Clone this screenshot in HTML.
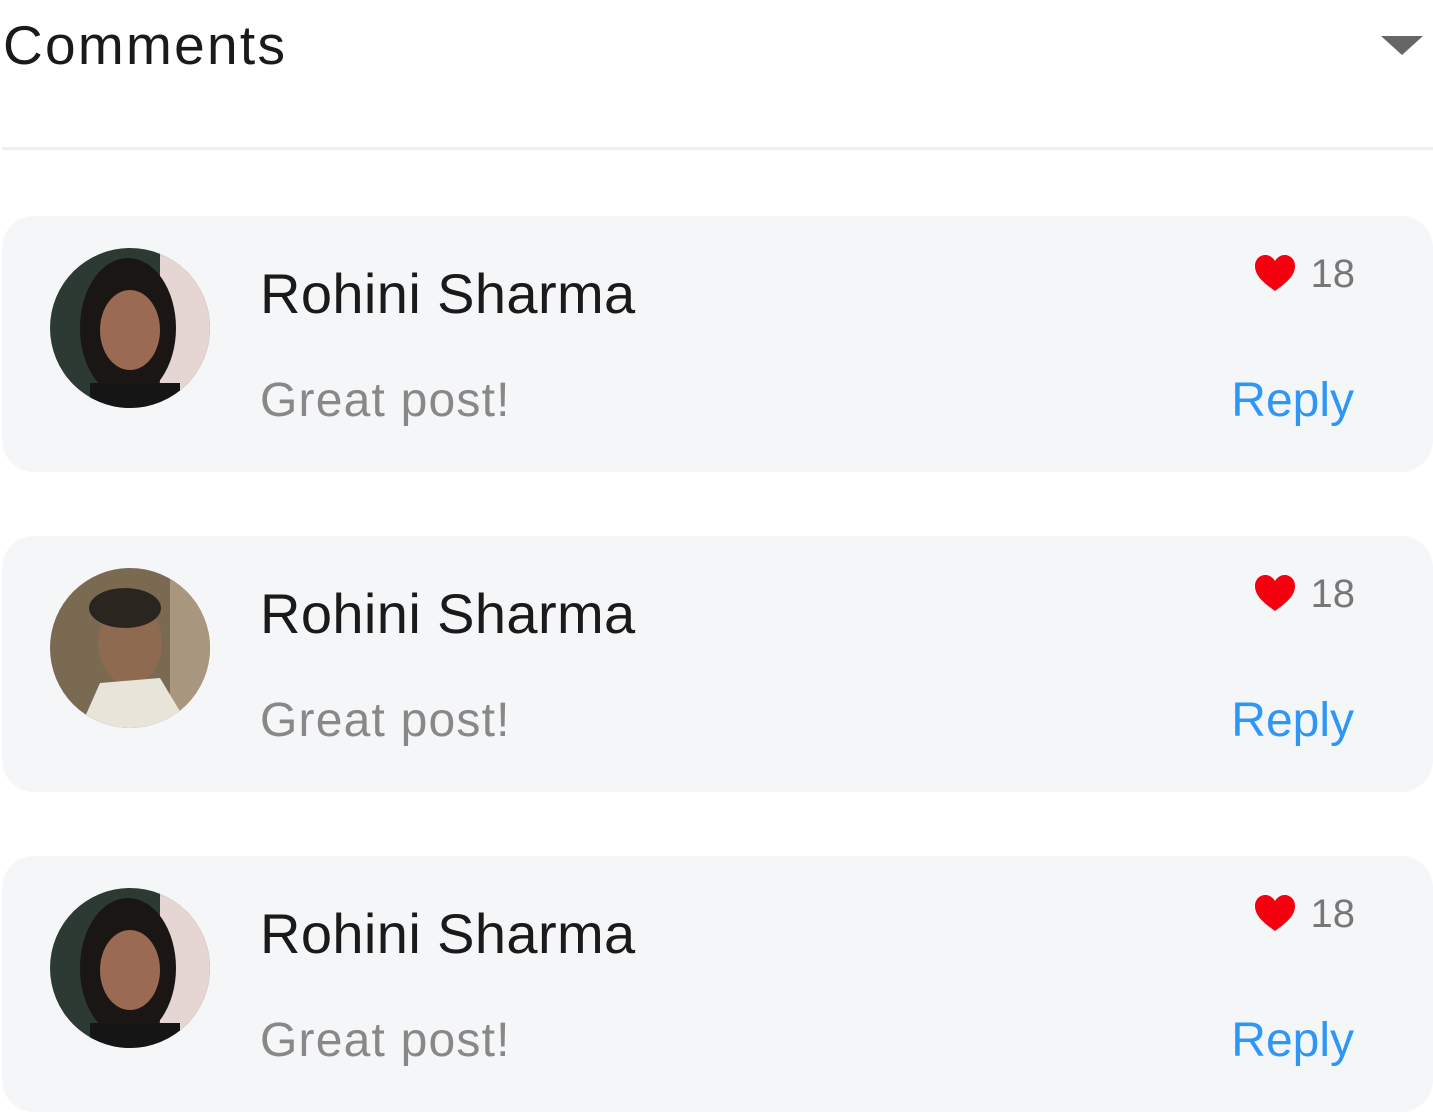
<!DOCTYPE html>
<html><head><meta charset="utf-8"><style>
*{margin:0;padding:0;box-sizing:border-box}
body{width:1433px;height:1112px;background:#fff;font-family:"Liberation Sans",sans-serif;position:relative;overflow:hidden}
.h{position:absolute;left:3px;top:13px;font-size:55px;color:#1a1a1a;letter-spacing:2.3px}
.chev{position:absolute;left:1381px;top:36px;width:0;height:0;border-left:21px solid transparent;border-right:21px solid transparent;border-top:19px solid #666}
.div{position:absolute;left:2px;top:147px;width:1431px;height:3px;background:#eceef0}
.card{position:absolute;left:2px;width:1431px;height:256px;background:#f5f6f8;border-radius:32px}
.av{position:absolute;left:48px;top:32px;width:160px;height:160px;border-radius:50%;overflow:hidden}
.name{position:absolute;left:258px;top:45px;font-size:56px;color:#1a1a1a;letter-spacing:0.4px}
.msg{position:absolute;left:258px;top:157px;font-size:48px;color:#888;letter-spacing:1.2px}
.reply{position:absolute;right:79px;top:157px;font-size:48px;color:#2e96f5}
.cnt{position:absolute;right:78px;top:36px;font-size:40px;color:#777}
.heart{position:absolute;left:1252px;top:38px}
</style></head><body>
<div class="h">Comments</div><div class="chev"></div><div class="div"></div>

<div class="card" style="top:216px">
<div class="av"><svg width="160" height="160"><rect width="160" height="160" fill="#2c3a33"/><rect x="110" width="50" height="160" fill="#e6d6d3"/><ellipse cx="78" cy="80" rx="48" ry="70" fill="#1a1614"/><ellipse cx="80" cy="82" rx="30" ry="40" fill="#9a6a52"/><rect x="40" y="135" width="90" height="30" fill="#151515"/></svg></div>
<div class="name">Rohini Sharma</div><div class="msg">Great post!</div><div class="reply">Reply</div>
<svg class="heart" width="42" height="38" viewBox="0 0 42 38"><path d="M21 37C10 29 1 22 1 12 1 5 6 1 11.5 1 16 1 19 4 21 7 23 4 26 1 30.5 1 36 1 41 5 41 12 41 22 32 29 21 37Z" fill="#f5000f"/></svg>
<div class="cnt">18</div></div>

<div class="card" style="top:536px">
<div class="av"><svg width="160" height="160"><rect width="160" height="160" fill="#7a6a52"/><rect x="120" width="40" height="160" fill="#a8977e"/><ellipse cx="80" cy="75" rx="32" ry="42" fill="#8d6a50"/><ellipse cx="75" cy="40" rx="36" ry="20" fill="#2b2520"/><path d="M30 160 L50 115 L110 110 L140 160Z" fill="#e8e4da"/></svg></div>
<div class="name">Rohini Sharma</div><div class="msg">Great post!</div><div class="reply">Reply</div>
<svg class="heart" width="42" height="38" viewBox="0 0 42 38"><path d="M21 37C10 29 1 22 1 12 1 5 6 1 11.5 1 16 1 19 4 21 7 23 4 26 1 30.5 1 36 1 41 5 41 12 41 22 32 29 21 37Z" fill="#f5000f"/></svg>
<div class="cnt">18</div></div>

<div class="card" style="top:856px">
<div class="av"><svg width="160" height="160"><rect width="160" height="160" fill="#2c3a33"/><rect x="110" width="50" height="160" fill="#e6d6d3"/><ellipse cx="78" cy="80" rx="48" ry="70" fill="#1a1614"/><ellipse cx="80" cy="82" rx="30" ry="40" fill="#9a6a52"/><rect x="40" y="135" width="90" height="30" fill="#151515"/></svg></div>
<div class="name">Rohini Sharma</div><div class="msg">Great post!</div><div class="reply">Reply</div>
<svg class="heart" width="42" height="38" viewBox="0 0 42 38"><path d="M21 37C10 29 1 22 1 12 1 5 6 1 11.5 1 16 1 19 4 21 7 23 4 26 1 30.5 1 36 1 41 5 41 12 41 22 32 29 21 37Z" fill="#f5000f"/></svg>
<div class="cnt">18</div></div>
</body></html>
